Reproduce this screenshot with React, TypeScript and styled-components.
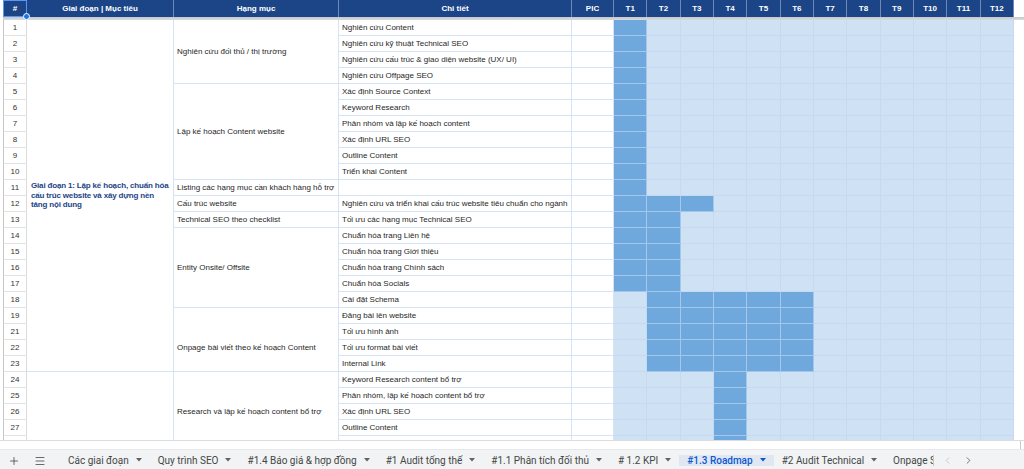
import React from 'react';
import styled, { createGlobalStyle, css } from 'styled-components';
import { Plus, Menu, ChevronLeft, ChevronRight } from 'lucide-react';

const GlobalStyle = createGlobalStyle`
  html, body { margin: 0; padding: 0; width: 1024px; height: 469px; overflow: hidden; background: #fff; }
  body { font-family: "Liberation Sans", Arial, sans-serif; }
  * { box-sizing: border-box; }
`;

const Page = styled.div`
  display: flex;
  flex-direction: column;
  width: 1024px;
  height: 469px;
  overflow: hidden;
`;

const Viewport = styled.div`
  height: 440px;
  flex-shrink: 0;
  overflow: hidden;
  padding-left: 3px;
`;

const Grid = styled.div`
  display: grid;
  grid-template-columns: 24px 147px 165px 233px 42px repeat(12, 33.333px) 1fr;
  grid-template-rows: 17px 3px repeat(27, 16px);
  font-family: "Liberation Sans", Arial, sans-serif;
  font-size: 8px;
  color: #1f1f1f;
`;

const HeadCell = styled.div<{ $selected?: boolean; $blank?: boolean }>`
  position: relative;
  display: flex;
  align-items: center;
  justify-content: center;
  background: ${p => (p.$blank ? '#fff' : '#1c4587')};
  color: #fff;
  font-weight: 700;
  border-right: 1px solid ${p => (p.$blank ? '#fff' : '#6f88b8')};
  white-space: nowrap;
  ${p =>
    p.$selected &&
    css`
      border: 1px solid #5b95f0;
    `}
`;

const Handle = styled.span`
  position: absolute;
  right: -4px;
  bottom: -4px;
  width: 7px;
  height: 7px;
  border-radius: 50%;
  background: #1a73e8;
  border: 1px solid #fff;
  z-index: 2;
`;

const FreezeBar = styled.div`
  grid-column: 1 / -1;
  background: linear-gradient(#c4c7cc, #d9dbde);
`;

const NumCell = styled.div`
  display: flex;
  align-items: center;
  justify-content: center;
  border-left: 1px solid #c6c6c6;
  border-right: 1px solid #dcdcdc;
  border-bottom: 1px solid #e2e2e2;
  color: #333;
`;

const TextCell = styled.div<{ $span?: number; $shift?: number }>`
  grid-row: span ${p => p.$span ?? 1};
  display: flex;
  align-items: center;
  padding: ${p => p.$shift ?? 0}px 3px 0 3px;
  border-right: 1px solid #d6e2f5;
  border-bottom: 1px solid #d6e2f5;
  white-space: nowrap;
  overflow: visible;
  background: #fff;
  position: relative;
`;

const PhaseCell = styled(TextCell)`
  padding: 0 4px;
  white-space: normal;
  color: #1c4587;
  font-weight: 700;
  letter-spacing: -0.17px;
  line-height: 9.6px;
`;

const DetailCell = styled(TextCell)`
  z-index: 1;
  background: transparent;
`;

const PicCell = styled.div`
  border-right: 1px solid #d6e2f5;
  border-bottom: 1px solid #d6e2f5;
  background: #fff;
`;

const BarCell = styled.div<{ $on: boolean }>`
  background: ${p => (p.$on ? '#6fa8dc' : '#cfe2f3')};
  border-right: 1px solid ${p => (p.$on ? '#a6c7ec' : '#c6d8f2')};
  border-bottom: 1px solid ${p => (p.$on ? '#a6c7ec' : '#c6d8f2')};
`;

const Filler = styled.div`
  background: #fff;
`;

const ScrollStrip = styled.div`
  height: 9px;
  flex-shrink: 0;
  border-top: 1px solid #dadce0;
  background: #fff;
  display: flex;
  justify-content: flex-end;
`;

const ScrollEnd = styled.div`
  width: 4px;
  border-left: 1px solid #c8c8c8;
`;

const TabBar = styled.div`
  height: 24px;
  flex-shrink: 0;
  display: flex;
  align-items: stretch;
  background: #f1f3f4;
  border-top: 1px solid #e6e8eb;
  color: #444746;
  font-family: Roboto, "Noto Sans", Arial, sans-serif;
`;

const IconButton = styled.div<{ $w: number; $muted?: boolean }>`
  width: ${p => p.$w}px;
  display: flex;
  align-items: center;
  justify-content: center;
  padding-bottom: 2px;
  color: ${p => (p.$muted ? '#b9bcc0' : '#444746')};
  flex-shrink: 0;
`;

const Tabs = styled.div`
  margin-left: 8px;
  width: 874px;
  flex-shrink: 0;
  display: flex;
  overflow: hidden;
  border-right: 1px solid #c4c7c5;
  margin-top: 5px;
  margin-bottom: 7px;
  align-items: stretch;
`;

const TabsWrap = styled.div`
  display: flex;
  align-items: stretch;
`;

const Tab = styled.div<{ $active?: boolean }>`
  display: flex;
  align-items: center;
  gap: 7px;
  padding: 0 8px 3px 8px;
  margin: -5px 0 -7px 0;
  font-size: 10px;
  white-space: nowrap;
  flex-shrink: 0;
  color: ${p => (p.$active ? '#0b57d0' : '#444746')};
  font-weight: ${p => (p.$active ? 500 : 400)};
  background: ${p => (p.$active ? '#e1e7f2' : 'transparent')};
`;

const Caret = ({ color }: { color: string }) => (
  <svg width="6" height="4" viewBox="0 0 6 4">
    <polygon points="0,0 6,0 3,3.6" fill={color} />
  </svg>
);

type Row = { n: string; detail: string; from: number; to: number };

const rows: Row[] = [
  { n: '1', detail: 'Nghiên cứu Content', from: 1, to: 1 },
  { n: '2', detail: 'Nghiên cứu kỹ thuật Technical SEO', from: 1, to: 1 },
  { n: '3', detail: 'Nghiên cứu cấu trúc & giao diện website (UX/ UI)', from: 1, to: 1 },
  { n: '4', detail: 'Nghiên cứu Offpage SEO', from: 1, to: 1 },
  { n: '5', detail: 'Xác định Source Context', from: 1, to: 1 },
  { n: '6', detail: 'Keyword Research', from: 1, to: 1 },
  { n: '7', detail: 'Phân nhóm và lập kế hoạch content', from: 1, to: 1 },
  { n: '8', detail: 'Xác định URL SEO', from: 1, to: 1 },
  { n: '9', detail: 'Outline Content', from: 1, to: 1 },
  { n: '10', detail: 'Triển khai Content', from: 1, to: 1 },
  { n: '11', detail: '', from: 1, to: 1 },
  { n: '12', detail: 'Nghiên cứu và triển khai cấu trúc website tiêu chuẩn cho ngành', from: 1, to: 3 },
  { n: '13', detail: 'Tối ưu các hạng mục Technical SEO', from: 1, to: 2 },
  { n: '14', detail: 'Chuẩn hóa trang Liên hệ', from: 1, to: 2 },
  { n: '15', detail: 'Chuẩn hóa trang Giới thiệu', from: 1, to: 2 },
  { n: '16', detail: 'Chuẩn hóa trang Chính sách', from: 1, to: 2 },
  { n: '17', detail: 'Chuẩn hóa Socials', from: 1, to: 2 },
  { n: '18', detail: 'Cài đặt Schema', from: 2, to: 6 },
  { n: '19', detail: 'Đăng bài lên website', from: 2, to: 6 },
  { n: '21', detail: 'Tối ưu hình ảnh', from: 2, to: 6 },
  { n: '22', detail: 'Tối ưu format bài viết', from: 2, to: 6 },
  { n: '23', detail: 'Internal Link', from: 2, to: 6 },
  { n: '24', detail: 'Keyword Research content bổ trợ', from: 4, to: 4 },
  { n: '25', detail: 'Phân nhóm, lập kế hoạch content bổ trợ', from: 4, to: 4 },
  { n: '26', detail: 'Xác định URL SEO', from: 4, to: 4 },
  { n: '27', detail: 'Outline Content', from: 4, to: 4 },
  { n: '', detail: '', from: 4, to: 4 },
];

// merged groups keyed by the index of their first row
const phases: Record<number, { span: number; text: string }> = {
  0: { span: 22, text: 'Giai đoạn 1: Lập kế hoạch, chuẩn hóa cấu trúc website và xây dựng nền tảng nội dung' },
  22: { span: 5, text: '' },
};

const items: Record<number, { span: number; text: string; shift?: number }> = {
  0: { span: 4, text: 'Nghiên cứu đối thủ / thị trường' },
  4: { span: 6, text: 'Lập kế hoạch Content website' },
  10: { span: 1, text: 'Listing các hạng mục cần khách hàng hỗ trợ' },
  11: { span: 1, text: 'Cấu trúc website' },
  12: { span: 1, text: 'Technical SEO theo checklist' },
  13: { span: 5, text: 'Entity Onsite/ Offsite' },
  18: { span: 4, text: 'Onpage bài viết theo kế hoạch Content', shift: 16 },
  22: { span: 5, text: 'Research và lập kế hoạch content bổ trợ' },
};

const months = Array.from({ length: 12 }, (_, i) => i + 1);

const tabs = [
  'Các giai đoạn',
  'Quy trình SEO',
  '#1.4 Báo giá & hợp đồng',
  '#1 Audit tổng thể',
  '#1.1 Phân tích đối thủ',
  '# 1.2 KPI',
  '#1.3 Roadmap',
  '#2 Audit Technical',
  'Onpage SEO',
];

export default function App() {
  return (
    <Page>
      <GlobalStyle />
      <Viewport>
        <Grid>
          <HeadCell $selected>
            #
            <Handle />
          </HeadCell>
          <HeadCell>Giai đoạn | Mục tiêu</HeadCell>
          <HeadCell>Hạng mục</HeadCell>
          <HeadCell>Chi tiết</HeadCell>
          <HeadCell>PIC</HeadCell>
          {months.map(m => (
            <HeadCell key={m}>T{m}</HeadCell>
          ))}
          <HeadCell $blank />
          <FreezeBar />
          {rows.map((r, i) => (
            <React.Fragment key={i}>
              <NumCell>{r.n}</NumCell>
              {phases[i] && <PhaseCell $span={phases[i].span}>{phases[i].text}</PhaseCell>}
              {items[i] && (
                <TextCell $span={items[i].span} $shift={items[i].shift}>
                  {items[i].text}
                </TextCell>
              )}
              <DetailCell>{r.detail}</DetailCell>
              <PicCell />
              {months.map(m => (
                <BarCell key={m} $on={m >= r.from && m <= r.to} />
              ))}
              <Filler />
            </React.Fragment>
          ))}
        </Grid>
      </Viewport>
      <ScrollStrip>
        <ScrollEnd />
      </ScrollStrip>
      <TabBar>
        <IconButton $w={28}>
          <Plus size={12} strokeWidth={1.6} />
        </IconButton>
        <IconButton $w={24}>
          <Menu size={12} strokeWidth={1.6} />
        </IconButton>
        <Tabs>
          <TabsWrap>
            {tabs.map(t => {
              const active = t === '#1.3 Roadmap';
              return (
                <Tab key={t} $active={active}>
                  {t}
                  <Caret color={active ? '#0b57d0' : '#5f6368'} />
                </Tab>
              );
            })}
          </TabsWrap>
        </Tabs>
        <IconButton $w={27} $muted>
          <ChevronLeft size={11} strokeWidth={1.6} />
        </IconButton>
        <IconButton $w={14}>
          <ChevronRight size={11} strokeWidth={1.6} />
        </IconButton>
      </TabBar>
    </Page>
  );
}
